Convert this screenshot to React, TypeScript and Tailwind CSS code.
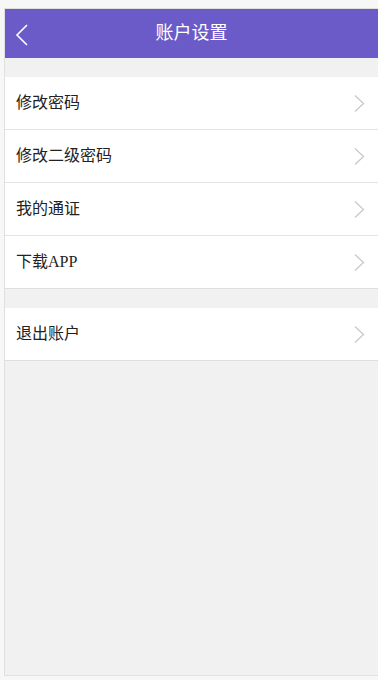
const GROUPS: string[][] = [
  ['修改密码', '修改二级密码', '我的通证', '下载APP'],
  ['退出账户'],
]

const FONT = { fontFamily: '"Liberation Serif", "Noto Sans CJK SC", serif' }

function Row({ label, last }: { label: string; last: boolean }) {
  return (
    <div
      className={
        'flex items-center justify-between h-[53px] pl-[11px] pr-[13px] bg-white border-b ' +
        (last ? 'border-[#dedede]' : 'border-[#e3e3e3]')
      }
    >
      <span className="text-[16px] text-[#222]">{label}</span>
      <svg width="11" height="17" viewBox="0 0 11 17" fill="none">
        <path d="M1 0.5 L9.5 8.5 L1 16.5" stroke="#c6c6cc" strokeWidth="1.2" />
      </svg>
    </div>
  )
}

export default function App() {
  return (
    <div className="w-[378px] h-[680px] bg-[#f7f7f7] pt-[8px] pl-[4px] pb-[4px]" style={FONT}>
      <div className="h-full flex flex-col bg-[#f1f1f1] border-t border-l border-b border-[#e0e0e0]">
        {/* Header */}
        <div className="relative h-[49px] bg-[#6b5bc9] flex items-center justify-center">
          <svg className="absolute left-[10px] top-[15px]" width="13" height="22" viewBox="0 0 13 22" fill="none">
            <path d="M12 1 L2 11 L12 21" stroke="#fff" strokeWidth="1.6" />
          </svg>
          <h1 className="text-[18px] text-white">账户设置</h1>
        </div>

        {GROUPS.map((items, gi) => (
          <div key={gi} className="mt-[19px]">
            {items.map((label, i) => (
              <Row key={label} label={label} last={i === items.length - 1} />
            ))}
          </div>
        ))}
      </div>
    </div>
  )
}
